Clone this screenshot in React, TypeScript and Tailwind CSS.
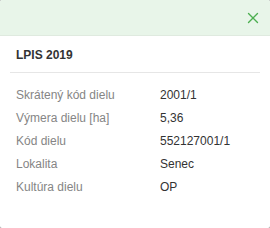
import { X } from 'lucide-react';

const rows = [
  ['Skrátený kód dielu', '2001/1'],
  ['Výmera dielu [ha]', '5,36'],
  ['Kód dielu', '552127001/1'],
  ['Lokalita', 'Senec'],
  ['Kultúra dielu', 'OP'],
];

export default function App() {
  return (
    <div className="w-[270px] h-[228px] bg-[#9e9e9e]" style={{ fontFamily: '"Liberation Sans", Arial, sans-serif' }}>
      <div className="w-full h-full bg-white rounded-[2px] overflow-hidden">
        <div className="h-[36px] bg-[#e8f5e9] border-b border-[#dfeadf] flex items-center justify-end pr-[8px]">
          <X size={18} strokeWidth={1.8} className="text-[#4caf50]" />
        </div>
        <div className="px-[10px]">
          <div className="h-[37px] flex items-center pt-[2px] px-[6px] border-b border-[#e6e6e6] text-[12px] font-bold text-[#333]">
            LPIS 2019
          </div>
          <div className="pt-[10px] px-[6px]">
            {rows.map(([k, v]) => (
              <div key={k} className="flex h-[23px] items-center text-[12px]">
                <div className="w-[144px] text-[#858585]">{k}</div>
                <div className="text-[#333]">{v}</div>
              </div>
            ))}
          </div>
        </div>
      </div>
    </div>
  );
}
